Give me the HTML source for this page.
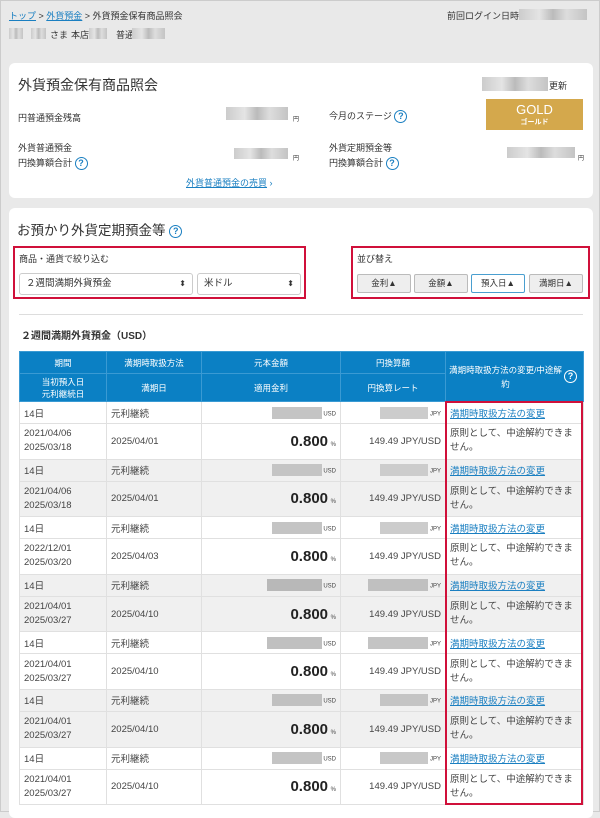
<!DOCTYPE html>
<html><head><meta charset="utf-8"><style>
*{box-sizing:border-box;margin:0;padding:0}
body{width:600px;height:812px;overflow:hidden;background:#e9e9e9;font-family:"Liberation Sans","Noto Sans CJK JP",sans-serif;color:#333;font-size:9px;position:relative;border:1px solid #ccc}
.a{position:absolute}
a{color:#1a7fc1;text-decoration:underline}
.blur{position:absolute;background:linear-gradient(90deg,#ccc,#e4e4e4 30%,#bbb 50%,#ddd 70%,#c4c4c4);height:11px}
.card{position:absolute;background:#fff;border-radius:6px;left:8px;width:584px}
.q{display:inline-block;width:13px;height:13px;border:1.5px solid #1a7fc1;border-radius:50%;color:#1a7fc1;font-size:9px;font-weight:bold;text-align:center;line-height:10px;vertical-align:middle}
.red{position:absolute;border:2px solid #d0103a}
.sel{position:absolute;top:272px;height:22px;border:1px solid #ccc;border-radius:3px;background:#fff;font-size:9.5px;padding:0 6px;line-height:20px}
.sel:after{content:"⬍";position:absolute;right:6px;top:0;font-size:8px}
.btn{position:absolute;top:273px;height:19px;width:54px;border:1px solid #bbb;border-radius:2px;background:#eee;font-size:8.5px;text-align:center;line-height:17px}
table{position:absolute;left:18px;top:350px;width:564px;border-collapse:collapse;table-layout:fixed;font-size:9.5px}
th{background:#0b80c4;color:#fff;font-weight:normal;font-size:8.5px;border:1px solid #3a9ad3;height:22px}
td{border:1px solid #e0e0e0;padding:0 4px;color:#444}
tr.s td{height:22px}
tr.d td{height:35.6px}
tr.g td{background:#f0f0f0}
td.r{text-align:right}
.p{font-size:15px;font-weight:bold;color:#222}
</style></head><body>
<div class="a" style="left:8px;top:8px"><a>トップ</a> &gt; <a>外貨預金</a> &gt; 外貨預金保有商品照会</div>
<div class="a" style="left:446px;top:8px">前回ログイン日時:</div><div class="blur" style="left:518px;top:8px;width:68px"></div>
<div class="blur" style="left:8px;top:27px;width:14px"></div><div class="blur" style="left:30px;top:27px;width:15px"></div>
<div class="a" style="left:49px;top:27px">さま</div><div class="a" style="left:70px;top:27px">本店</div><div class="blur" style="left:88px;top:27px;width:18px"></div>
<div class="a" style="left:115px;top:27px">普通</div><div class="blur" style="left:131px;top:27px;width:33px"></div>

<div class="card" style="top:62px;height:135px">
<div class="a" style="left:9px;top:12px;font-size:14px">外貨預金保有商品照会</div>
<div class="blur" style="left:473px;top:14px;width:66px;height:14px"></div><div class="a" style="left:540px;top:16px">更新</div>
<div class="a" style="left:9px;top:48px">円普通預金残高</div>
<div class="blur" style="left:217px;top:44px;width:62px;height:13px"></div><div class="a" style="left:284px;top:51px;font-size:6px">円</div>
<div class="a" style="left:320px;top:46px">今月のステージ <span class="q">?</span></div>
<div style="position:absolute;left:477px;top:36px;width:97px;height:31px;background:#d4a84c;color:#fff;text-align:center"><div style="font-size:13px;line-height:15px;margin-top:3px">GOLD</div><div style="font-size:7px;font-weight:bold">ゴールド</div></div>
<div class="a" style="left:9px;top:78px;line-height:15px">外貨普通預金<br>円換算額合計 <span class="q">?</span></div>
<div class="blur" style="left:225px;top:85px;width:54px"></div><div class="a" style="left:284px;top:90px;font-size:6px">円</div>
<div class="a" style="left:320px;top:78px;line-height:15px">外貨定期預金等<br>円換算額合計 <span class="q">?</span></div>
<div class="blur" style="left:498px;top:84px;width:68px"></div><div class="a" style="left:569px;top:90px;font-size:6px">円</div>
<div class="a" style="left:177px;top:113px"><a>外貨普通預金の売買</a> <span style="color:#1a7fc1">›</span></div>
</div>

<div class="card" style="top:207px;height:610px"></div>
<div class="a" style="left:16px;top:218px;font-size:13.5px">お預かり外貨定期預金等 <span class="q">?</span></div>
<div class="red" style="left:12px;top:245px;width:293px;height:53px"></div>
<div class="a" style="left:18px;top:251px">商品・通貨で絞り込む</div>
<div class="sel" style="left:18px;width:174px">２週間満期外貨預金</div>
<div class="sel" style="left:196px;width:104px">米ドル</div>
<div class="red" style="left:350px;top:245px;width:239px;height:53px"></div>
<div class="a" style="left:356px;top:251px">並び替え</div>
<div class="btn" style="left:356px">金利▲</div>
<div class="btn" style="left:413px">金額▲</div>
<div class="btn" style="left:470px;background:#fff;border-color:#4a9fd0">預入日▲</div>
<div class="btn" style="left:528px">満期日▲</div>
<div class="a" style="left:18px;top:313px;width:564px;border-top:1px solid #ddd"></div>
<div class="a" style="left:20px;top:326px;font-weight:bold;font-size:10px">２週間満期外貨預金（USD）</div>

<table>
<colgroup><col style="width:87px"><col style="width:95px"><col style="width:139px"><col style="width:105px"><col style="width:138px"></colgroup>
<tr><th>期間</th><th>満期時取扱方法</th><th>元本金額</th><th>円換算額</th><th rowspan="2" style="position:relative;padding-right:18px;line-height:14px">満期時取扱方法の変更/中途解約<span class="q" style="position:absolute;right:6px;top:18px;border-color:#fff;color:#fff">?</span></th></tr>
<tr><th style="height:28px;line-height:12px">当初預入日<br>元利継続日</th><th>満期日</th><th>適用金利</th><th>円換算レート</th></tr>
<tr class="s"><td>14日</td><td>元利継続</td><td class="r"><span style="display:inline-block;width:50px;height:12px;background:#c4c4c4;vertical-align:middle"></span><span style="font-size:6px"> USD</span></td><td class="r"><span style="display:inline-block;width:48px;height:12px;background:#ccc;vertical-align:middle"></span><span style="font-size:6px"> JPY</span></td><td><a>満期時取扱方法の変更</a></td></tr>
<tr class="d"><td style="line-height:14px">2021/04/06<br>2025/03/18</td><td>2025/04/01</td><td class="r"><span class="p">0.800</span> <span style="font-size:6px">%</span></td><td class="r">149.49 JPY/USD</td><td style="line-height:14px">原則として、中途解約できません。</td></tr>
<tr class="s g"><td>14日</td><td>元利継続</td><td class="r"><span style="display:inline-block;width:50px;height:12px;background:#c4c4c4;vertical-align:middle"></span><span style="font-size:6px"> USD</span></td><td class="r"><span style="display:inline-block;width:48px;height:12px;background:#ccc;vertical-align:middle"></span><span style="font-size:6px"> JPY</span></td><td><a>満期時取扱方法の変更</a></td></tr>
<tr class="d g"><td style="line-height:14px">2021/04/06<br>2025/03/18</td><td>2025/04/01</td><td class="r"><span class="p">0.800</span> <span style="font-size:6px">%</span></td><td class="r">149.49 JPY/USD</td><td style="line-height:14px">原則として、中途解約できません。</td></tr>
<tr class="s"><td>14日</td><td>元利継続</td><td class="r"><span style="display:inline-block;width:50px;height:12px;background:#c4c4c4;vertical-align:middle"></span><span style="font-size:6px"> USD</span></td><td class="r"><span style="display:inline-block;width:48px;height:12px;background:#ccc;vertical-align:middle"></span><span style="font-size:6px"> JPY</span></td><td><a>満期時取扱方法の変更</a></td></tr>
<tr class="d"><td style="line-height:14px">2022/12/01<br>2025/03/20</td><td>2025/04/03</td><td class="r"><span class="p">0.800</span> <span style="font-size:6px">%</span></td><td class="r">149.49 JPY/USD</td><td style="line-height:14px">原則として、中途解約できません。</td></tr>
<tr class="s g"><td>14日</td><td>元利継続</td><td class="r"><span style="display:inline-block;width:55px;height:12px;background:#b8b8b8;vertical-align:middle"></span><span style="font-size:6px"> USD</span></td><td class="r"><span style="display:inline-block;width:60px;height:12px;background:#c0c0c0;vertical-align:middle"></span><span style="font-size:6px"> JPY</span></td><td><a>満期時取扱方法の変更</a></td></tr>
<tr class="d g"><td style="line-height:14px">2021/04/01<br>2025/03/27</td><td>2025/04/10</td><td class="r"><span class="p">0.800</span> <span style="font-size:6px">%</span></td><td class="r">149.49 JPY/USD</td><td style="line-height:14px">原則として、中途解約できません。</td></tr>
<tr class="s"><td>14日</td><td>元利継続</td><td class="r"><span style="display:inline-block;width:55px;height:12px;background:#c0c0c0;vertical-align:middle"></span><span style="font-size:6px"> USD</span></td><td class="r"><span style="display:inline-block;width:60px;height:12px;background:#c4c4c4;vertical-align:middle"></span><span style="font-size:6px"> JPY</span></td><td><a>満期時取扱方法の変更</a></td></tr>
<tr class="d"><td style="line-height:14px">2021/04/01<br>2025/03/27</td><td>2025/04/10</td><td class="r"><span class="p">0.800</span> <span style="font-size:6px">%</span></td><td class="r">149.49 JPY/USD</td><td style="line-height:14px">原則として、中途解約できません。</td></tr>
<tr class="s g"><td>14日</td><td>元利継続</td><td class="r"><span style="display:inline-block;width:50px;height:12px;background:#c0c0c0;vertical-align:middle"></span><span style="font-size:6px"> USD</span></td><td class="r"><span style="display:inline-block;width:48px;height:12px;background:#c4c4c4;vertical-align:middle"></span><span style="font-size:6px"> JPY</span></td><td><a>満期時取扱方法の変更</a></td></tr>
<tr class="d g"><td style="line-height:14px">2021/04/01<br>2025/03/27</td><td>2025/04/10</td><td class="r"><span class="p">0.800</span> <span style="font-size:6px">%</span></td><td class="r">149.49 JPY/USD</td><td style="line-height:14px">原則として、中途解約できません。</td></tr>
<tr class="s"><td>14日</td><td>元利継続</td><td class="r"><span style="display:inline-block;width:50px;height:12px;background:#c4c4c4;vertical-align:middle"></span><span style="font-size:6px"> USD</span></td><td class="r"><span style="display:inline-block;width:48px;height:12px;background:#c8c8c8;vertical-align:middle"></span><span style="font-size:6px"> JPY</span></td><td><a>満期時取扱方法の変更</a></td></tr>
<tr class="d"><td style="line-height:14px">2021/04/01<br>2025/03/27</td><td>2025/04/10</td><td class="r"><span class="p">0.800</span> <span style="font-size:6px">%</span></td><td class="r">149.49 JPY/USD</td><td style="line-height:14px">原則として、中途解約できません。</td></tr>
</table>
<div class="red" style="left:444px;top:400px;width:138px;height:404px"></div>
</body></html>
